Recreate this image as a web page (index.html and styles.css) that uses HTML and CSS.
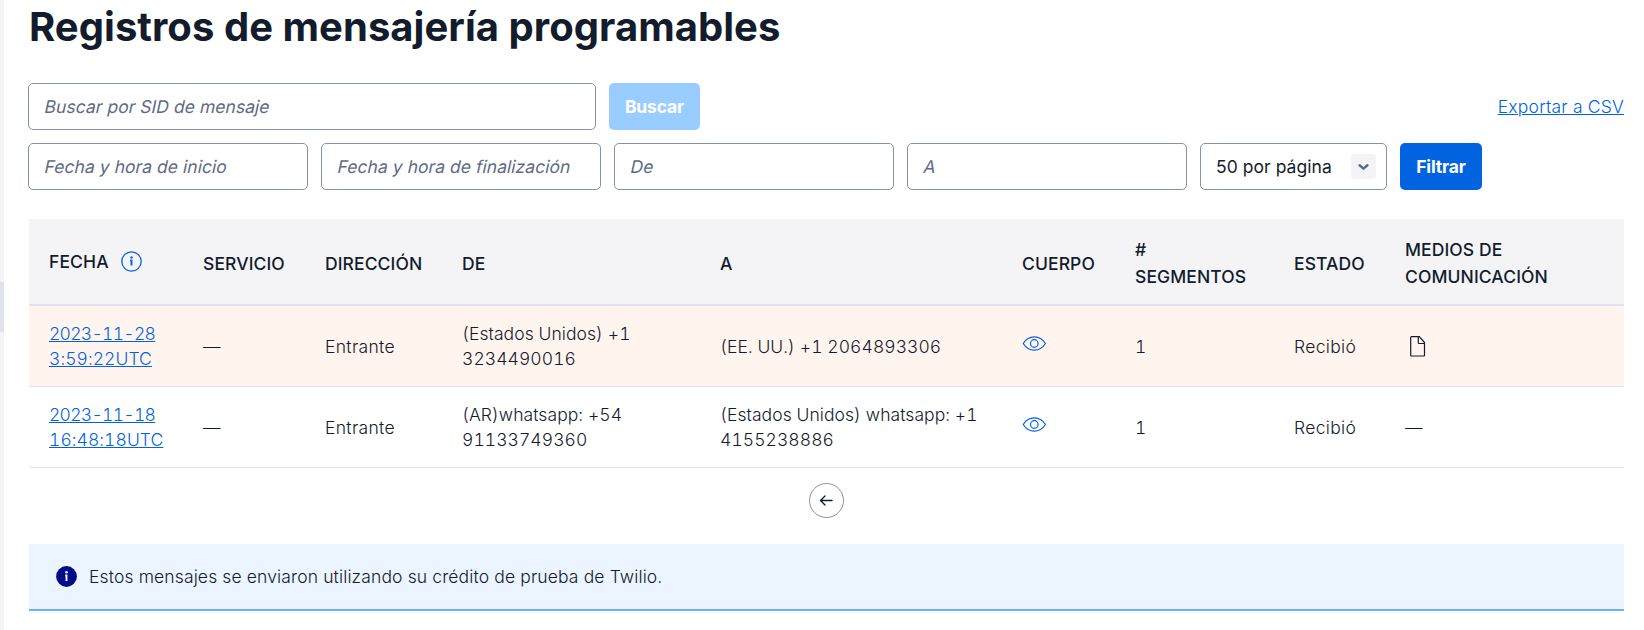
FILE: index.html
```html
<!DOCTYPE html>
<html lang="es">
<head>
<meta charset="utf-8">
<title>Registros de mensajería programables</title>
<link rel="stylesheet" href="styles.css">
</head>
<body>
<div class="app">
  <aside class="rail"><div class="rail-handle"></div></aside>
  <main class="main">
    <h1 class="title">Registros de mensajería programables</h1>
    <div class="search-row">
      <div class="field field-search"><span class="hint">Buscar por SID de mensaje</span></div>
      <button class="btn btn-disabled">Buscar</button>
      <a class="link export" href="#">Exportar a CSV</a>
    </div>
    <div class="filter-row">
      <div class="field"><span class="hint">Fecha y hora de inicio</span></div>
      <div class="field"><span class="hint">Fecha y hora de finalización</span></div>
      <div class="field"><span class="hint">De</span></div>
      <div class="field"><span class="hint">A</span></div>
      <div class="select"><span>50 por página</span><span class="chevron"><svg width="25" height="25" viewBox="0 0 25 25"><path d="M8.6 11.2l3.9 3.4 3.9-3.4" fill="none" stroke="#606b85" stroke-width="2.500" stroke-linecap="round" stroke-linejoin="round"/></svg></span></div>
      <button class="btn btn-primary">Filtrar</button>
    </div>
    <table class="log">
      <colgroup><col class="c-date"><col class="c-service"><col class="c-dir"><col class="c-from"><col class="c-to"><col class="c-body"><col class="c-seg"><col class="c-status"><col class="c-media"></colgroup>
      <thead>
        <tr>
          <th><span class="date-head">FECHA <svg width="21" height="21" viewBox="0 0 21 21"><circle cx="10.5" cy="10.5" r="9.7" fill="none" stroke="#0263e0" stroke-width="1.3"/><circle cx="10.5" cy="6.5" r="1.2" fill="#0263e0"/><path d="M9.200 9.5h1.300v5" fill="none" stroke="#0263e0" stroke-width="1.900"/></svg></span></th>
          <th class="single">SERVICIO</th><th class="single">DIRECCIÓN</th><th class="single">DE</th><th class="single">A</th><th class="single">CUERPO</th><th>#<br>SEGMENTOS</th><th class="single">ESTADO</th><th>MEDIOS DE<br>COMUNICACIÓN</th>
        </tr>
      </thead>
      <tbody>
        <tr class="highlight">
          <td><a class="link" href="#"><span class="day">2023-11-28</span><br>3:59:22UTC</a></td>
          <td>—</td><td class="word">Entrante</td>
          <td>(Estados Unidos) +1<br>3234490016</td>
          <td>(EE. UU.) +1 2064893306</td>
          <td><svg class="eye" width="25" height="17" viewBox="0 0 25 17"><path d="M1.2 8.5C4 4 7.8 1.9 12.3 1.9S20.600 4 23.400 8.500C20.600 13 16.800 15.100 12.300 15.100S4 13 1.200 8.500z" fill="none" stroke="#0263e0" stroke-width="1.200" stroke-linejoin="round"/><circle cx="12.300" cy="8.500" r="3.800" fill="none" stroke="#0263e0" stroke-width="1.200"/></svg></td>
          <td>1</td><td class="word">Recibió</td>
          <td><svg class="file" width="16" height="21" viewBox="0 0 16 21"><path d="M1.500.7h7.800l5.200 5.800v12.800q0 .7-.7.7H1.500q-.8 0-.8-.8V1.500q0-.8.8-.8zM8.300.8v5.900q0 .8.800.8h5.400" fill="none" stroke="#121c2d" stroke-width="1.200" stroke-linejoin="round"/></svg></td>
        </tr>
        <tr>
          <td><a class="link" href="#"><span class="day">2023-11-18</span><br>16:48:18UTC</a></td>
          <td>—</td><td class="word">Entrante</td>
          <td>(AR)whatsapp: +54<br>91133749360</td>
          <td>(Estados Unidos) whatsapp: +1<br>4155238886</td>
          <td><svg class="eye" width="25" height="17" viewBox="0 0 25 17"><path d="M1.2 8.5C4 4 7.8 1.9 12.3 1.9S20.600 4 23.400 8.500C20.600 13 16.800 15.100 12.300 15.100S4 13 1.200 8.500z" fill="none" stroke="#0263e0" stroke-width="1.200" stroke-linejoin="round"/><circle cx="12.300" cy="8.500" r="3.800" fill="none" stroke="#0263e0" stroke-width="1.200"/></svg></td>
          <td>1</td><td class="word">Recibió</td><td>—</td>
        </tr>
      </tbody>
    </table>
    <div class="pager"><button class="page-back" aria-label="Anterior"><svg width="15" height="13" viewBox="0 0 15 13"><path d="M13 6.500H1.500M6 2L1.500 6.500 6 11" fill="none" stroke="#121c2d" stroke-width="1.400" stroke-linecap="round" stroke-linejoin="round"/></svg></button></div>
    <div class="notice">
      <svg width="21" height="21" viewBox="0 0 21 21"><circle cx="10.500" cy="10.500" r="10.400" fill="#030b87"/><circle cx="10.500" cy="6.300" r="1.300" fill="#ebf4ff"/><path d="M9.200 9.500h1.300v5.500" fill="none" stroke="#ebf4ff" stroke-width="1.900"/></svg>
      <span>Estos mensajes se enviaron utilizando su crédito de prueba de Twilio.</span>
    </div>
  </main>
</div>
</body>
</html>
```
FILE: styles.css
```css
* { box-sizing: border-box; }
body { margin: 0; background: #fff; color: #121c2d; font-family: Inter, "Liberation Sans", sans-serif; font-size: 17.5px; line-height: 25px; }
.app { display: flex; height: 630px; overflow: hidden; }
.rail { width: 4px; flex: none; background: #f4f4f6; padding-top: 282px; }
.rail-handle { height: 50px; background: #e1e3ea; }
.main { flex: 1; padding: 0 20px 0 24px; }
.title { margin: 0; height: 83px; padding: 2px 0 0 1px; font-size: 40px; line-height: 50px; font-weight: 700; letter-spacing: 0.04px; }
.search-row, .filter-row { display: flex; gap: 13px; align-items: center; height: 47px; }
.filter-row { margin-top: 13px; }
.field { width: 280px; height: 47px; border: 1px solid #8891aa; border-radius: 5px; padding: 0 16px; background: #fff; display: flex; align-items: center; }
.hint { color: #606b85; transform: skewX(-12deg); letter-spacing: 0.04px; }
.field-search { width: 568px; }
.btn { height: 47px; border: 0; border-radius: 5px; padding: 0; color: #fff; font: inherit; font-weight: 700; letter-spacing: -0.15px; }
.btn-disabled { width: 91px; background: #99cdff; }
.btn-primary { width: 82px; background: #0263e0; }
.link { color: #0263e0; font-weight: 300; text-decoration: underline; }
.export { margin-left: auto; letter-spacing: 0.2px; }
.select { width: 187px; height: 47px; border: 1px solid #8891aa; border-radius: 5px; padding: 0 10px 0 15px; display: flex; align-items: center; justify-content: space-between; letter-spacing: 0.05px; }
.chevron { width: 25px; height: 25px; background: #f4f4f6; border-radius: 3px; display: flex; }
.log { width: 1595px; margin: 29px 0 0 1px; border-collapse: separate; border-spacing: 0; table-layout: fixed; font-weight: 300; }
.c-date { width: 154px; }
.c-service { width: 122px; }
.c-dir { width: 137px; }
.c-from { width: 258px; }
.c-to { width: 302px; }
.c-body { width: 113px; }
.c-seg { width: 159px; }
.c-status { width: 111px; }
.c-media { width: 239px; }
.log th { height: 87px; padding: 2px 0 0 20px; background: #f4f4f6; border-bottom: 2px solid #e1e3ea; text-align: left; font-weight: 500; line-height: 27px; vertical-align: middle; white-space: nowrap; letter-spacing: 0.1px; }
.log th.single { padding-top: 4px; }
.log td { height: 81px; padding: 0 0 0 20px; border-bottom: 1px solid #e1e3ea; vertical-align: middle; white-space: nowrap; font-variant-numeric: tabular-nums; letter-spacing: 0.07px; }
.log td.word { letter-spacing: 0.33px; }
.day { letter-spacing: -0.7px; }
.highlight td { background: #fff4ee; }
.date-head { display: flex; align-items: center; gap: 12px; margin-top: -2px; }
.eye { display: block; margin-top: -5px; }
.file { display: block; margin-left: 5px; }
.pager { display: flex; justify-content: center; padding: 15px 0 26px 1px; }
.page-back { width: 35px; height: 35px; border: 1px solid #8891aa; border-radius: 50%; background: #fff; padding: 0; display: flex; align-items: center; justify-content: center; }
.notice { margin-left: 1px; height: 67px; display: flex; align-items: center; gap: 12px; padding-left: 27px; background: #ebf4ff; border-bottom: 2px solid #66b3ff; font-weight: 300; letter-spacing: 0.13px; }
```
